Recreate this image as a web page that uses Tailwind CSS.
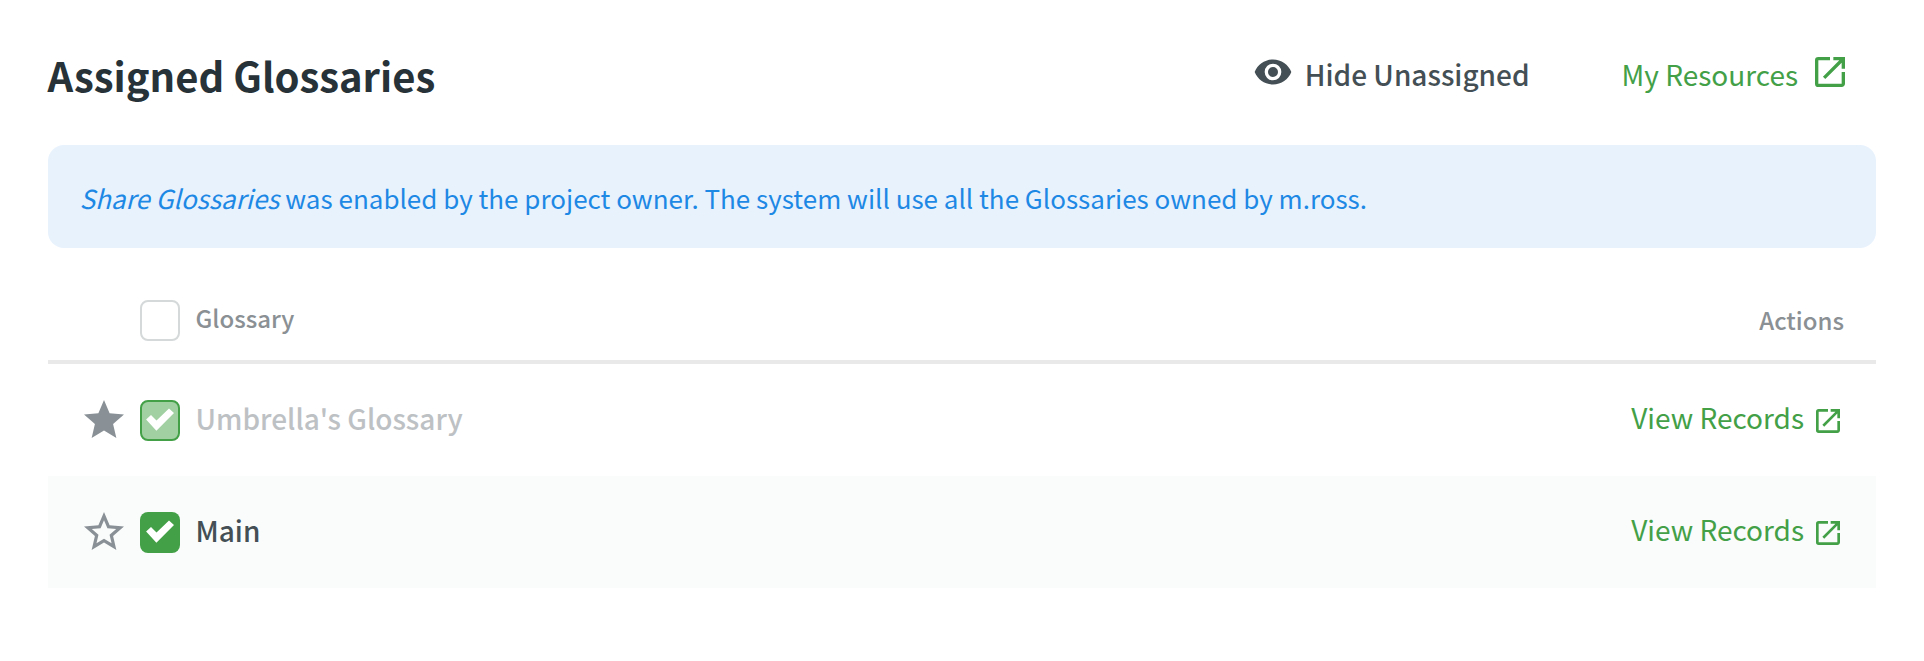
<!DOCTYPE html>
<html lang="en">
<head>
<meta charset="utf-8">
<title>Assigned Glossaries</title>
<script src="https://cdn.jsdelivr.net/npm/@tailwindcss/browser@4"></script>
</head>
<body class="bg-white font-['Noto_Sans_CJK_SC',sans-serif] text-[28px] leading-10 text-[#434f54] whitespace-nowrap">
<svg class="hidden">
  <symbol id="open" viewBox="0 0 24 24"><path d="M19 19H5V5h7V3H5a2 2 0 0 0-2 2v14a2 2 0 0 0 2 2h14c1.100 0 2-.9 2-2v-7h-2v7zM14 3v2h3.590l-9.830 9.830 1.410 1.410L19 6.410V10h2V3h-7z"/></symbol>
  <symbol id="check" viewBox="0 0 40 40"><path d="M6.100 19.500 11 15l5.500 5.500L29 8.600l5 4.300L16.400 30.800z"/></symbol>
</svg>
<main class="px-12 pt-12">
  <header class="flex h-[97px] items-start">
    <h1 class="-ml-[0.5px] pt-[7px] text-[40px] font-bold text-[#263238]">Assigned Glossaries</h1>
    <div class="ml-auto flex items-start gap-[92px] pr-[26px]">
      <button class="flex items-start gap-3">
        <svg class="mt-1 size-10 fill-[#434f54]" viewBox="0 0 24 24"><path d="M12 4.500C7 4.500 2.730 7.610 1 12c1.730 4.390 6 7.500 11 7.500s9.270-3.110 11-7.500c-1.730-4.390-6-7.500-11-7.500zM12 17a5 5 0 1 1 0-10 5 5 0 0 1 0 10zm0-8a3 3 0 1 0 0 6 3 3 0 0 0 0-6z"/></svg>
        <span class="pt-1.5 font-medium">Hide Unassigned</span>
      </button>
      <a class="flex items-start gap-3 text-[#43a047]"><span class="pt-1.5">My Resources</span><svg class="mt-1 size-10 fill-current"><use href="#open"/></svg></a>
    </div>
  </header>
  <p class="flex h-[103px] items-center rounded-2xl bg-[#e8f2fd] pt-0.5 pl-[31.500px] text-[26px] text-[#1e88e5]"><span class="italic">Share Glossaries</span><span class="pl-1.5">was enabled by the project owner. The system will use all the Glossaries owned by m.ross.</span></p>
  <section class="mt-[26px]">
    <div class="flex h-[90px] items-start border-b-4 border-[#e9e9e9] pt-[26px] pr-8 pl-[91.500px] text-2xl leading-10 font-medium text-[#8a9094]">
      <span class="h-[41px] w-10 rounded-lg border-2 border-[#d5d9d9]"></span>
      <span class="-mt-0.5 ml-4">Glossary</span>
      <span class="ml-auto">Actions</span>
    </div>
    <div class="flex h-28 items-center pr-8 pl-[31.500px]">
      <svg class="size-12 fill-[#8a9196]" viewBox="0 0 24 24"><path d="M12 17.270 18.180 21l-1.640-7.030L22 9.240l-7.190-.61L12 2 9.190 8.630 2 9.240l5.460 4.730L5.820 21z"/></svg>
      <span class="mt-px ml-[12.500px] h-[41px] w-10 rounded-lg border-2 border-[#43a047] bg-[#a1d0a3]"><svg class="-m-0.5 size-10 fill-white"><use href="#check"/></svg></span>
      <span class="ml-[15.500px] pb-1 font-medium text-[#bdc1c4]">Umbrella's Glossary</span>
      <a class="ml-auto flex items-center gap-2 text-[#43a047]"><span class="pb-1.5">View Records</span><svg class="mt-0.5 size-8 fill-current"><use href="#open"/></svg></a>
    </div>
    <div class="flex h-28 items-center bg-[#fafcfb] pr-8 pl-[31.500px]">
      <svg class="size-12 fill-[#8a9196]" viewBox="0 0 24 24"><path d="m22 9.240-7.190-.62L12 2 9.190 8.630 2 9.240l5.460 4.730L5.820 21 12 17.270 18.180 21l-1.630-7.030L22 9.240zM12 15.400l-3.760 2.270 1-4.280-3.320-2.880 4.380-.38L12 6.100l1.710 4.040 4.380.38-3.320 2.880 1 4.280L12 15.400z"/></svg>
      <span class="mt-px ml-[12.500px] h-[41px] w-10 rounded-lg bg-[#43a047]"><svg class="size-10 fill-white"><use href="#check"/></svg></span>
      <span class="ml-[15.500px] pb-1 font-medium">Main</span>
      <a class="ml-auto flex items-center gap-2 text-[#43a047]"><span class="pb-1.5">View Records</span><svg class="mt-0.5 size-8 fill-current"><use href="#open"/></svg></a>
    </div>
  </section>
</main>
</body>
</html>
